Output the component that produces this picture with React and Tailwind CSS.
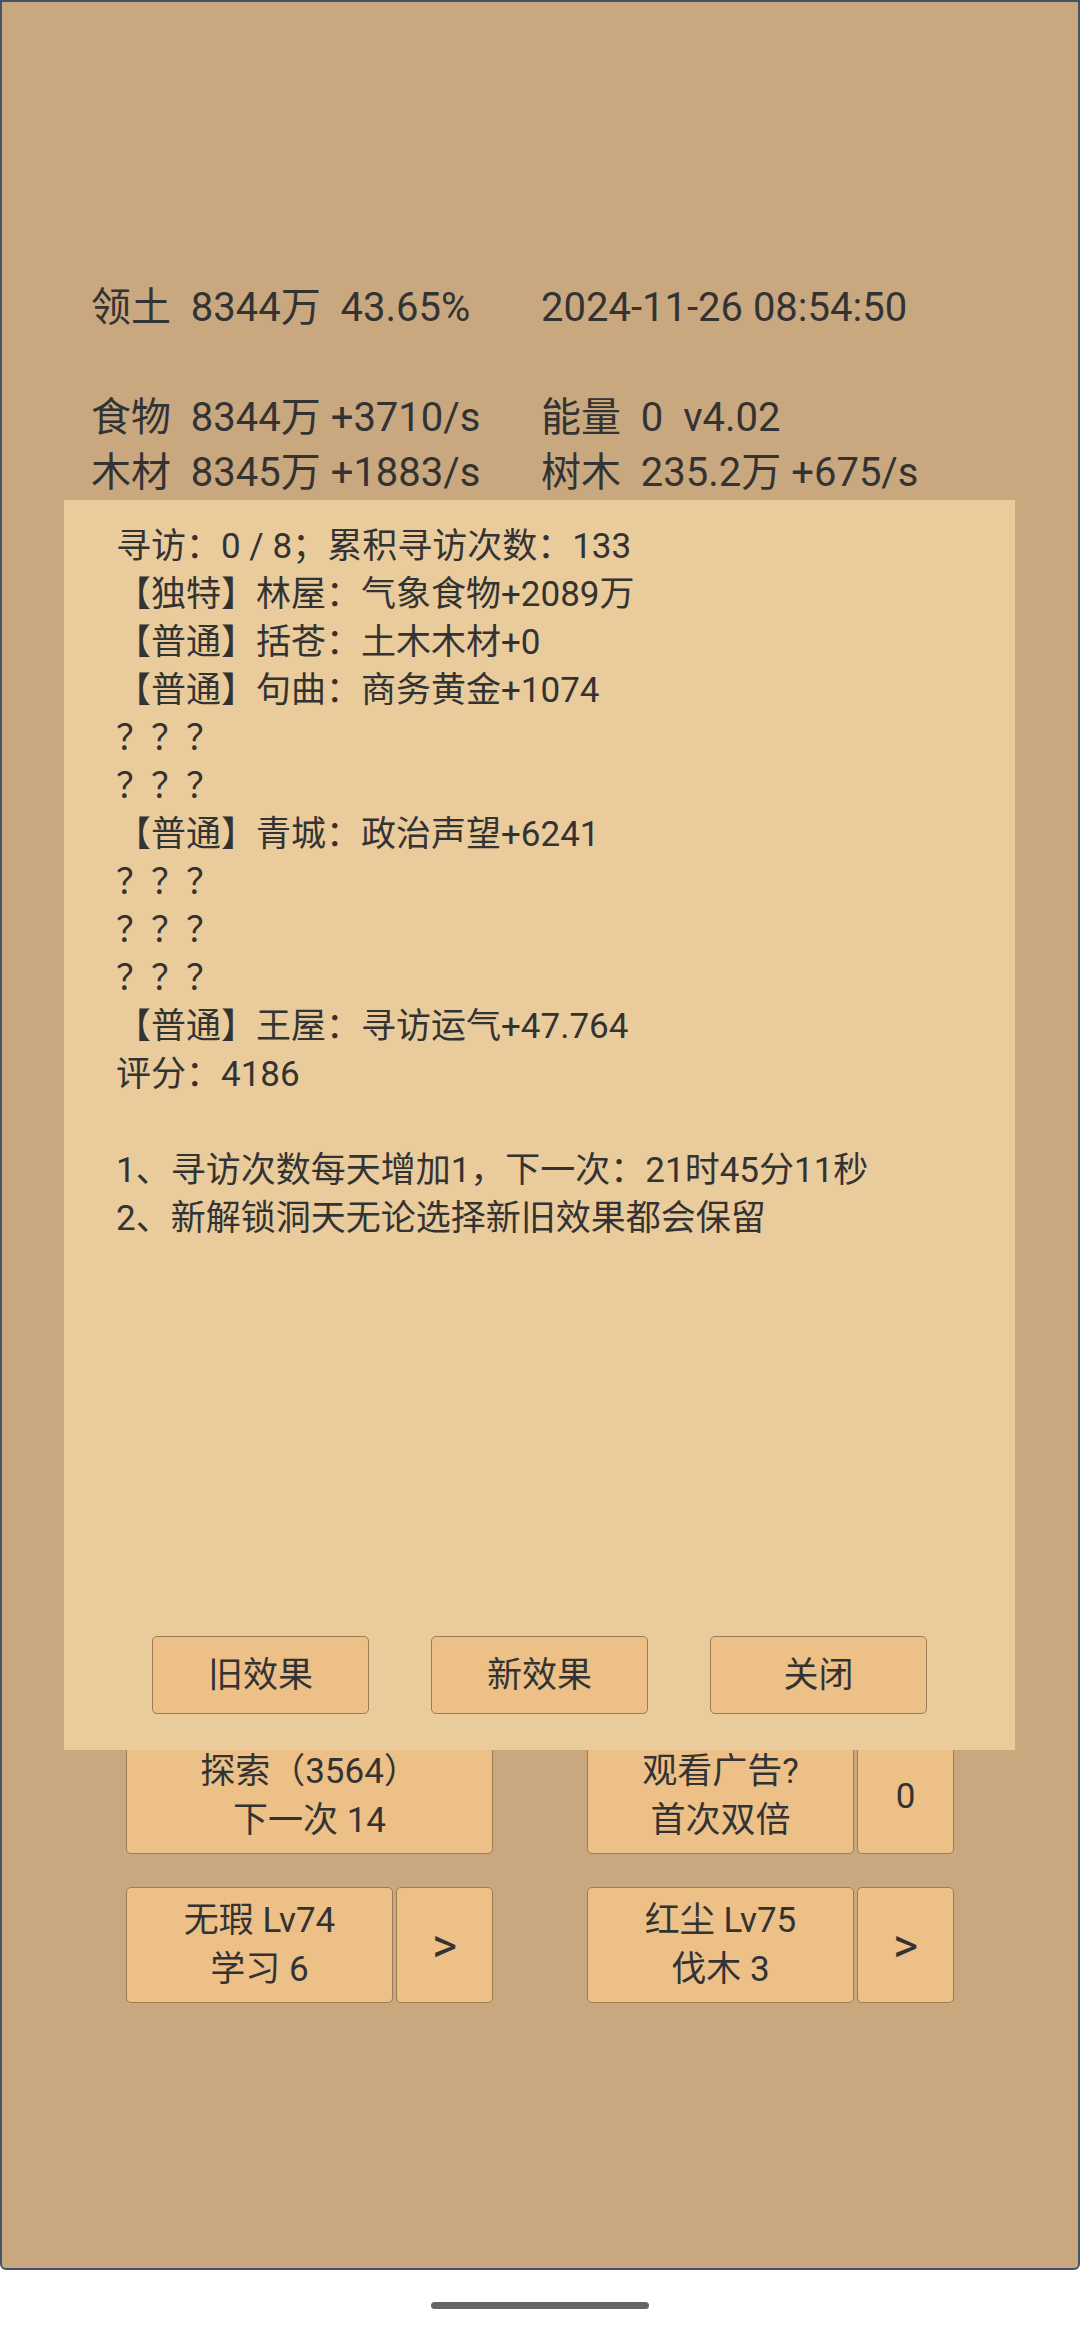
const stats = [
  ["领土  8344万  43.65%", "2024-11-26 08:54:50"],
  ["", ""],
  ["食物  8344万 +3710/s", "能量  0  v4.02"],
  ["木材  8345万 +1883/s", "树木  235.2万 +675/s"],
];

const visits = [
  "寻访：0 / 8；累积寻访次数：133",
  "【独特】林屋：气象食物+2089万",
  "【普通】括苍：土木木材+0",
  "【普通】句曲：商务黄金+1074",
  "？？？",
  "？？？",
  "【普通】青城：政治声望+6241",
  "？？？",
  "？？？",
  "？？？",
  "【普通】王屋：寻访运气+47.764",
  "评分：4186",
  "",
  "1、寻访次数每天增加1，下一次：21时45分11秒",
  "2、新解锁洞天无论选择新旧效果都会保留",
];

const btn =
  "bg-[#ecc087] border border-[#9d7b55] rounded-[5px] flex flex-col items-center justify-center text-[35px] leading-[49px] text-[#333]";

function ActionPair({ main, side, sideClass }) {
  return (
    <div className="flex gap-[3px] w-[367px]">
      <div className={`${btn} ${side === null ? "flex-1" : "w-[267px]"} h-[116px]`}>
        {main.map((l, i) => (
          <span key={i} className="whitespace-pre">
            {l}
          </span>
        ))}
      </div>
      {side !== null && (
        <div className={`${btn} flex-1 h-[116px] ${sideClass}`}>{side}</div>
      )}
    </div>
  );
}

export default function App() {
  return (
    <div className="w-[1080px] h-[2340px] bg-white flex flex-col font-['Roboto','Noto_Sans_CJK_SC',sans-serif] text-[#333]">
      <div className="relative h-[2270px] border-2 border-[#44526a] rounded-b-[6px] bg-[#c9a87f] pt-[278px] pl-[89px]">
        <div className="flex flex-col text-[40px] leading-[55px]">
          {stats.map(([a, b], i) => (
            <div key={i} className="grid grid-cols-[450px_1fr] h-[55px]">
              <span className="whitespace-pre">{a}</span>
              <span className="whitespace-pre">{b}</span>
            </div>
          ))}
        </div>

        <div className="mt-[1238px] -ml-[89px] flex justify-center gap-[94px]">
          <div className="flex flex-col gap-[33px]">
            <ActionPair main={["探索（3564）", "下一次 14"]} side={null} />
            <ActionPair main={["无瑕 Lv74", "学习 6"]} side=">" sideClass="text-[48px]" />
          </div>
          <div className="flex flex-col gap-[33px]">
            <ActionPair main={["观看广告?", "首次双倍"]} side="0" sideClass="" />
            <ActionPair main={["红尘 Lv75", "伐木 3"]} side=">" sideClass="text-[48px]" />
          </div>
        </div>

        <div className="absolute left-[62px] top-[498px] w-[951px] h-[1250px] bg-[#eacb9c] flex flex-col pt-[23px] pb-[36px]">
          <div className="flex flex-col pl-[52px] text-[35px] leading-[48px]">
            {visits.map((l, i) => (
              <div key={i} className="h-[48px] whitespace-pre">
                {l}
              </div>
            ))}
          </div>
          <div className="mt-auto flex justify-center gap-[62px]">
            {["旧效果", "新效果", "关闭"].map((t) => (
              <div key={t} className={`${btn} w-[217px] h-[78px]`}>
                {t}
              </div>
            ))}
          </div>
        </div>
      </div>
      <div className="flex-1 flex items-center justify-center">
        <div className="w-[218px] h-[7px] rounded-full bg-[#666]" />
      </div>
    </div>
  );
}
